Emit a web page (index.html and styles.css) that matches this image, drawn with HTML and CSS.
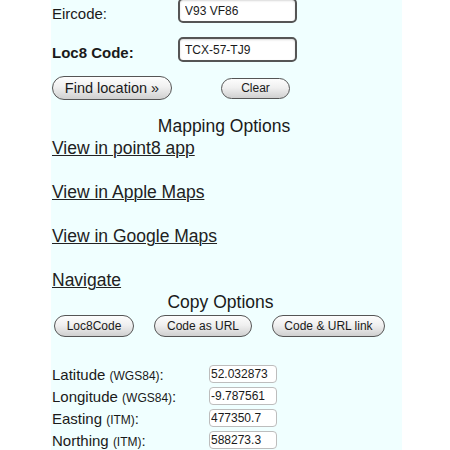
FILE: index.html
```html
<!DOCTYPE html>
<html lang="en">
<head>
    <meta charset="UTF-8">
    <meta name="viewport" content="width=device-width, initial-scale=1.0">
    <title>Loc8 Code lookup</title>
    <link rel="stylesheet" href="styles.css">
</head>
<body>
    <div class="panel">
        <div class="lookup">
            <div class="field">
                <label class="field-label" for="eircode">Eircode:</label>
                <input class="code-input" id="eircode" type="text" value="V93 VF86">
            </div>
            <div class="field">
                <label class="field-label bold" for="loc8">Loc8 Code:</label>
                <input class="code-input" id="loc8" type="text" value="TCX-57-TJ9">
            </div>
            <div class="actions">
                <button class="pill pill-large">Find location &raquo;</button>
                <button class="pill pill-small">Clear</button>
            </div>
        </div>

        <div class="heading heading-map">Mapping Options</div>
        <div class="links">
            <a href="#">View in point8 app</a>
            <a href="#">View in Apple Maps</a>
            <a href="#">View in Google Maps</a>
            <a href="#">Navigate</a>
        </div>

        <div class="heading heading-copy">Copy Options</div>
        <div class="copy-row">
            <button class="pill copy-code">Loc8Code</button>
            <button class="pill copy-url">Code as URL</button>
            <button class="pill copy-link">Code &amp; URL link</button>
        </div>

        <div class="coords">
            <div class="coord-row">
                <span class="coord-label">Latitude <span class="unit">(WGS84)</span>:</span>
                <input class="coord-input" type="text" value="52.032873">
            </div>
            <div class="coord-row">
                <span class="coord-label">Longitude <span class="unit">(WGS84)</span>:</span>
                <input class="coord-input" type="text" value="-9.787561">
            </div>
            <div class="coord-row">
                <span class="coord-label">Easting <span class="unit">(ITM)</span>:</span>
                <input class="coord-input" type="text" value="477350.7">
            </div>
            <div class="coord-row">
                <span class="coord-label">Northing <span class="unit">(ITM)</span>:</span>
                <input class="coord-input" type="text" value="588273.3">
            </div>
        </div>
    </div>
</body>
</html>
```

FILE: styles.css
```css
* {
    box-sizing: border-box;
}

body {
    font-family: "Liberation Sans", Arial, sans-serif;
    margin: 0;
    padding: 0;
    background-color: #fff;
    color: #1a1a1a;
    overflow: hidden;
}

.panel {
    margin-left: 51px;
    width: 351px;
    min-height: 100vh;
    background-color: #f0ffff;
}

.lookup {
    margin-top: -2px;
    display: flex;
    flex-direction: column;
    gap: 14px;
}

.field {
    display: flex;
    align-items: center;
}

.field-label {
    width: 127px;
    padding: 6px 0 0 1px;
    font-size: 15px;
}

.bold {
    font-weight: bold;
}

.code-input {
    width: 119px;
    height: 25px;
    border: 2px solid #555;
    border-radius: 5px;
    padding: 0 5px;
    background-color: #fff;
    font-family: "Liberation Sans", Arial, sans-serif;
    font-size: 12px;
    color: #1a1a1a;
    box-shadow: inset 0 1px 2px rgba(0, 0, 0, 0.15);
}

.actions {
    display: flex;
    align-items: center;
    gap: 49px;
    padding-left: 1px;
}

.pill {
    border: 1px solid #555;
    border-radius: 999px;
    background: linear-gradient(#fdfdfd, #f0f0f0 45%, #d0d0d0);
    font-family: "Liberation Sans", Arial, sans-serif;
    color: #1a1a1a;
    padding: 0;
    cursor: pointer;
}

.pill-large {
    width: 120px;
    height: 24px;
    font-size: 14.5px;
}

.pill-small {
    width: 69px;
    height: 21px;
    font-size: 12px;
}

.heading {
    font-size: 17.5px;
    line-height: 22px;
    text-align: center;
}

.heading-map {
    margin-top: 15px;
    padding-right: 5px;
}

.heading-copy {
    padding-right: 12px;
}

.links {
    display: flex;
    flex-direction: column;
    align-items: flex-start;
    gap: 22px;
    padding-left: 1px;
}

.links a {
    font-size: 17.5px;
    line-height: 22px;
    color: #222;
    text-decoration: underline;
    text-decoration-thickness: 1px;
}

.copy-row {
    display: flex;
    gap: 20px;
    margin-top: 2px;
    padding-left: 3px;
}

.copy-row .pill {
    height: 22px;
    font-size: 12px;
}

.copy-code {
    width: 80px;
}

.copy-url {
    width: 98px;
}

.copy-link {
    width: 113px;
}

.coords {
    margin-top: 26px;
}

.coord-row {
    display: flex;
    align-items: center;
    height: 22px;
}

.coord-label {
    width: 158px;
    padding-left: 1px;
    font-size: 15px;
}

.unit {
    font-size: 12px;
}

.coord-input {
    width: 68px;
    height: 18px;
    border: 1px solid #bdbdbd;
    border-radius: 4px;
    padding: 0 1px;
    background-color: #fff;
    font-family: "Liberation Sans", Arial, sans-serif;
    font-size: 12px;
    color: #1a1a1a;
}
```
